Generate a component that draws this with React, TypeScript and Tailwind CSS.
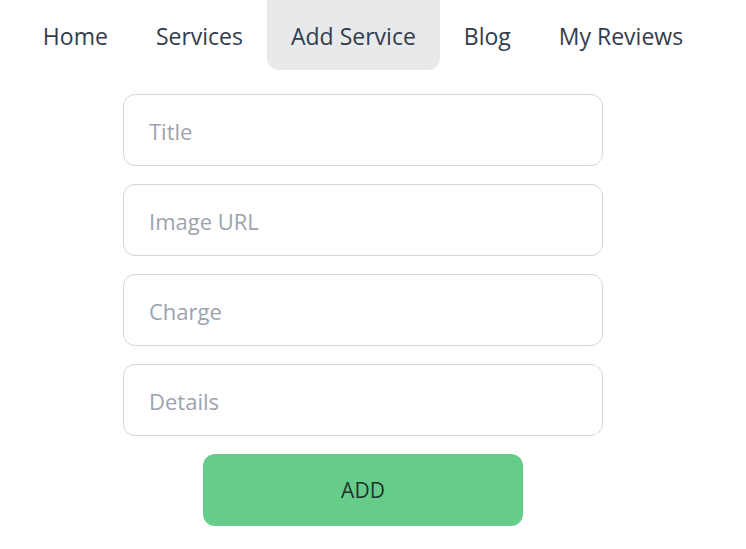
import React from 'react';

const links = ['Home', 'Services', 'Add Service', 'Blog', 'My Reviews'];
const fields = ['Title', 'Image URL', 'Charge', 'Details'];

const App = () => {
  return (
    <div className="w-[726px] min-h-[549px] bg-white text-[#333c4d]" style={{ fontFamily: '"Open Sans", "Noto Sans", sans-serif' }}>
      <nav className="flex justify-center">
        {links.map((link) => (
          <a
            key={link}
            className={`flex h-[70px] items-center px-6 pt-[2px] text-[23px] rounded-b-xl ${
              link === 'Add Service' ? 'bg-[#e8e9eb]' : ''
            }`}
          >
            {link}
          </a>
        ))}
      </nav>

      <form className="mt-6 flex flex-col items-center gap-[18px]">
        {fields.map((field) => (
          <input
            key={field}
            type="text"
            placeholder={field}
            className="h-[72px] w-[480px] rounded-xl border border-[#d5d6d8] px-[25px] pt-[2px] text-[22px] outline-none placeholder:text-[#9ca3af]"
          />
        ))}
        <button
          type="button"
          className="h-[72px] w-[320px] rounded-xl bg-[#66cc8a] pt-[2px] text-[21px] text-[#1e3329]"
        >
          ADD
        </button>
      </form>
    </div>
  );
};

export default App;
